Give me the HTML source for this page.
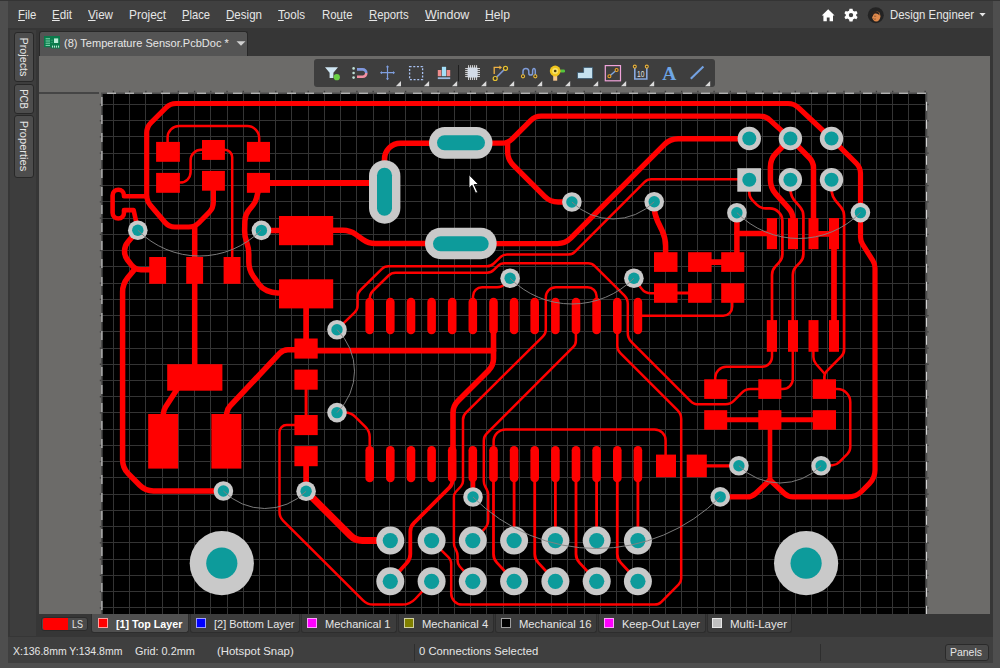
<!DOCTYPE html>
<html lang="en"><head><meta charset="utf-8"><title>Temperature Sensor.PcbDoc</title>
<style>
*{box-sizing:border-box;margin:0;padding:0}
html,body{width:1000px;height:668px;overflow:hidden;background:#4e4e4e;font-family:"Liberation Sans",sans-serif;font-size:11.8px;color:#e4e4e4}
#app{position:absolute;left:0;top:0;width:1000px;height:668px;overflow:hidden;background:#4e4e4e}
.abs{position:absolute}
#frame{left:8px;top:0;width:985px;height:662.5px;background:#363636}
#topline{left:0;top:0;width:1000px;height:1px;background:#343434}
#menubar{left:8px;top:1px;width:985px;height:27px;background:#404040}
.tx{position:absolute;height:16px;line-height:16px;white-space:nowrap;color:#e6e6e6;transform-origin:0 50%}
.tx u{text-decoration:underline;text-underline-offset:1.2px;text-decoration-thickness:1px}
.vtx{position:absolute;white-space:nowrap;color:#e6e6e6;line-height:16px;height:16px}
#work{left:39px;top:56px;width:951px;height:558px;background:#6c6b69}
#workshadow{left:39px;top:91.9px;width:60px;height:1.9px;background:#454545}
.pcb{position:absolute;left:0;top:0}
.icons{position:absolute;left:0;top:0;pointer-events:none}
.stab{position:absolute;left:13.6px;width:20.8px;background:#4d4d4d;border:1px solid #282828;border-radius:3px}
#doctab{left:38.8px;top:31px;width:209.2px;height:25px;background:#545454;border:1px solid #282828;border-bottom:none;border-radius:3px 3px 0 0}
#toolbar{left:314.3px;top:59px;width:400.5px;height:27.6px;background:#3e3e3e;border-radius:3px}
.ltab{position:absolute;top:614px;height:18.5px;background:#3c3c3c;border:1px solid #2d2d2d;border-top:none;border-radius:0 0 3px 3px}
.ltab.on{background:#505050;height:19px}
#ls{left:41.3px;top:616.6px;width:46.6px;height:14.6px;background:#4a4a4a;border:1px solid #2b2b2b;border-radius:3px}
#lsred{left:42.6px;top:617.8px;width:25px;height:12.3px;background:#ff0000;border-radius:2px 0 0 2px}
.sw{position:absolute;top:617.7px;width:10.6px;height:10.4px;border:1px solid rgba(255,255,255,0.62)}
#status{left:8px;top:637px;width:985px;height:25.7px;background:#3f3f3f}
#sidestrip{left:10px;top:29.5px;width:26.2px;height:606.5px;background:#3d3d3d}
.sep{position:absolute;top:644px;width:1px;height:17px;background:#2e2e2e}
#panels{left:944.5px;top:644px;width:44px;height:17px;background:#4a4a4a;border:1px solid #2a2a2a;border-radius:3px}

</style></head>
<body>
<div id="app">
<div class="abs" id="frame"></div>
<div class="abs" id="menubar"></div>
<div class="abs" id="sidestrip"></div>
<div class="abs" id="topline"></div>
<div class="stab" style="top:32px;height:50.3px"></div>
<div class="stab" style="top:84px;height:29.5px"></div>
<div class="stab" style="top:115px;height:62.5px"></div>
<div class="abs" id="doctab"></div>
<div class="abs" id="work"></div>
<div class="abs" id="workshadow"></div>
<svg class="pcb" width="1000" height="668" viewBox="0 0 1000 668">
<defs><clipPath id="bc"><rect x="102.0" y="93.5" width="824.2" height="520.5"/></clipPath></defs>
<rect x="102.0" y="93.5" width="824.2" height="520.5" fill="#000"/>
<g clip-path="url(#bc)">
<path d="M113.5,93.5V614.0M129.5,93.5V614.0M145.5,93.5V614.0M162.5,93.5V614.0M178.5,93.5V614.0M194.5,93.5V614.0M210.5,93.5V614.0M227.5,93.5V614.0M243.5,93.5V614.0M259.5,93.5V614.0M275.5,93.5V614.0M291.5,93.5V614.0M308.5,93.5V614.0M324.5,93.5V614.0M340.5,93.5V614.0M356.5,93.5V614.0M373.5,93.5V614.0M389.5,93.5V614.0M405.5,93.5V614.0M421.5,93.5V614.0M438.5,93.5V614.0M454.5,93.5V614.0M470.5,93.5V614.0M486.5,93.5V614.0M503.5,93.5V614.0M519.5,93.5V614.0M535.5,93.5V614.0M551.5,93.5V614.0M567.5,93.5V614.0M584.5,93.5V614.0M600.5,93.5V614.0M616.5,93.5V614.0M632.5,93.5V614.0M649.5,93.5V614.0M665.5,93.5V614.0M681.5,93.5V614.0M697.5,93.5V614.0M714.5,93.5V614.0M730.5,93.5V614.0M746.5,93.5V614.0M762.5,93.5V614.0M779.5,93.5V614.0M795.5,93.5V614.0M811.5,93.5V614.0M827.5,93.5V614.0M843.5,93.5V614.0M860.5,93.5V614.0M876.5,93.5V614.0M892.5,93.5V614.0M908.5,93.5V614.0M925.5,93.5V614.0M102.0,104.5H926.2M102.0,120.5H926.2M102.0,136.5H926.2M102.0,153.5H926.2M102.0,169.5H926.2M102.0,185.5H926.2M102.0,201.5H926.2M102.0,218.5H926.2M102.0,234.5H926.2M102.0,250.5H926.2M102.0,266.5H926.2M102.0,283.5H926.2M102.0,299.5H926.2M102.0,315.5H926.2M102.0,331.5H926.2M102.0,348.5H926.2M102.0,364.5H926.2M102.0,380.5H926.2M102.0,396.5H926.2M102.0,412.5H926.2M102.0,429.5H926.2M102.0,445.5H926.2M102.0,461.5H926.2M102.0,477.5H926.2M102.0,494.5H926.2M102.0,510.5H926.2M102.0,526.5H926.2M102.0,542.5H926.2M102.0,559.5H926.2M102.0,575.5H926.2M102.0,591.5H926.2M102.0,607.5H926.2" stroke="#343434" stroke-width="1" fill="none" shape-rendering="crispEdges"/>
<g fill="none" stroke="#ff0000" stroke-linecap="round" stroke-linejoin="round">
<path d="M213.4,190.0 L213.40,202.00 A14.65,14.65 0 0 1 209.19,212.28 L198.91,222.72 A14.32,14.32 0 0 1 188.70,227.00 L175.00,227.00 A13.05,13.05 0 0 1 165.09,222.45 L150.61,205.55 A16.21,16.21 0 0 1 146.70,195.00 L146.70,133.00 A14.49,14.49 0 0 1 150.94,122.76 L165.96,107.74 A14.49,14.49 0 0 1 176.20,103.50 L788.00,103.50 A15.19,15.19 0 0 1 798.38,107.60 L827.12,134.50 A383.13,383.13 0 0 1 835.75,142.84 L856.25,163.26 A14.45,14.45 0 0 1 860.50,173.50 L860.50,237.00 A13.85,13.85 0 0 0 862.63,244.38 L872.87,260.62 A13.85,13.85 0 0 1 875.00,268.00 L875.00,470.00 A19.31,19.31 0 0 1 869.34,483.66 L861.76,491.24 A19.31,19.31 0 0 1 848.10,496.90 L793.00,496.90 A12.63,12.63 0 0 1 784.35,493.48 L770.0,480.0" stroke-width="5.2"/>
<path d="M770.0,480.0 L755.65,493.48 A12.63,12.63 0 0 1 747.00,496.90 L720.2,496.9" stroke-width="5.4"/>
<path d="M770.0,420.0 L770.0,480.0" stroke-width="4.6"/>
<path d="M194.7,227.0 L194.7,365.0" stroke-width="5.5"/>
<path d="M490.0,143.2 L502.00,143.20 A14.49,14.49 0 0 0 512.24,138.96 L530.86,120.34 A14.49,14.49 0 0 1 541.10,116.10 L759.50,116.10 A15.59,15.59 0 0 1 769.95,120.12 L790.4,138.6" stroke-width="5.3"/>
<path d="M507.6,143.2 L507.60,151.50 A19.28,19.28 0 0 0 513.26,165.15 L544.54,196.35 A19.35,19.35 0 0 0 558.20,202.00 L571.9,202.0" stroke-width="5.4"/>
<path d="M384.5,162.0 L384.50,159.20 A16.00,16.00 0 0 1 400.50,143.20 L432.0,143.2" stroke-width="5.5"/>
<path d="M494.0,243.6 L557.40,243.60 A19.31,19.31 0 0 0 571.06,237.94 L664.54,144.46 A19.31,19.31 0 0 1 678.20,138.80 L749.3,138.8" stroke-width="5.4"/>
<path d="M258.0,183.0 L372.0,183.0" stroke-width="5.8"/>
<path d="M258.5,190.0 L256.47,198.12 A18.12,18.12 0 0 1 252.99,205.11 L248.77,210.33 A17.64,17.64 0 0 0 244.86,221.00 L244.64,230.00 A32.25,32.25 0 0 0 246.52,241.65 L246.78,242.35 A34.53,34.53 0 0 1 248.80,254.00 L248.80,262.00 A24.99,24.99 0 0 0 253.45,276.51 L258.84,284.07 A19.48,19.48 0 0 0 267.00,290.65 L267.00,290.65 A28.01,28.01 0 0 0 277.44,292.92 L281.0,293.0" stroke-width="5.5"/>
<path d="M261.4,230.4 L281.0,230.4" stroke-width="5.5"/>
<path d="M331.0,230.3 L343.00,230.30 A21.73,21.73 0 0 1 355.68,234.39 L362.82,239.51 A21.73,21.73 0 0 0 375.50,243.60 L428.0,243.6" stroke-width="5.5"/>
<path d="M306.1,306.0 L306.1,340.0" stroke-width="5.7"/>
<path d="M316.0,350.6 L493.5,350.6" stroke-width="5.7"/>
<path d="M493.5,332.0 L493.50,358.50 A16.90,16.90 0 0 1 488.55,370.45 L457.95,401.05 A16.90,16.90 0 0 0 453.00,413.00 L453.0,450.0" stroke-width="5.6"/>
<path d="M452.4,478.0 L452.40,480.60 A9.66,9.66 0 0 1 449.57,487.43 L413.84,523.16 A12.07,12.07 0 0 0 410.30,531.70 L410.30,554.00 A13.06,13.06 0 0 1 406.96,562.72 L390.3,581.3" stroke-width="3.8"/>
<path d="M306.1,491.3 L350.35,535.55 A16.90,16.90 0 0 0 362.30,540.50 L390.3,540.5" stroke-width="7.0"/>
<path d="M306.1,464.0 L306.1,491.3" stroke-width="5.7"/>
<path d="M177.2,389.0 L165.69,406.65 A14.80,14.80 0 0 0 163.30,414.00 L163.2,416.0" stroke-width="5.5"/>
<path d="M226.4,416.0 L226.75,412.97 A12.03,12.03 0 0 1 229.94,406.09 L279.57,353.44 A11.58,11.58 0 0 1 288.00,349.80 L296.0,349.8" stroke-width="5.6"/>
<path d="M137.8,230.2 L127.72,242.17 A13.70,13.70 0 0 0 124.50,251.00 L124.50,251.00 A14.74,14.74 0 0 0 127.54,259.97 L131.35,264.94 A12.16,12.16 0 0 0 141.00,269.70 L151.0,269.7" stroke-width="5.5"/>
<path d="M134.5,269.5 L127.68,277.82 A22.36,22.36 0 0 0 122.60,292.00 L122.60,460.00 A19.37,19.37 0 0 0 128.24,473.67 L139.76,485.23 A19.25,19.25 0 0 0 153.40,490.90 L223.4,490.9" stroke-width="5.5"/>
<path d="M654.2,201.8 L654.20,206.00 A35.49,35.49 0 0 0 657.63,221.23 L662.17,230.77 A35.49,35.49 0 0 1 665.60,246.00 L665.6,254.0" stroke-width="5.5"/>
<path d="M736.9,212.7 L736.9,254.0" stroke-width="5.5"/>
<path d="M736.9,233.4 L768.0,233.4" stroke-width="5.5"/>
<path d="M710.0,262.2 L723.0,262.2" stroke-width="5.7"/>
<path d="M676.0,292.9 L690.0,292.9" stroke-width="3.0"/>
<path d="M790.4,138.6 L776.00,153.29 A19.59,19.59 0 0 0 770.40,167.00 L770.40,180.00 A20.78,20.78 0 0 0 775.76,193.93 L788.98,208.55 A15.58,15.58 0 0 1 793.00,219.00 L793.0,220.0" stroke-width="5.5"/>
<path d="M790.4,138.6 L809.28,157.73 A14.62,14.62 0 0 1 813.50,168.00 L813.5,220.0" stroke-width="5.5"/>
<path d="M817.0,233.8 L831.0,233.8" stroke-width="5.7"/>
<path d="M834.0,247.0 L834.0,322.0" stroke-width="5.7"/>
<path d="M725.0,419.7 L814.0,419.7" stroke-width="5.0"/>
<path d="M705.0,465.8 L738.9,465.8" stroke-width="3.2"/>
<path d="M473.0,480.0 L473.0,497.0" stroke-width="4.6"/>
<path d="M147,196.3 H124 V195.5 A5.7,5.7 0 0 0 112.6,195.5 V212.8 A5.7,5.7 0 0 0 124,212.8 V210.1 H133.6 L137.8,229" stroke-width="4.6"/>
<path d="M167.6,143.0 L167.60,137.60 A11.50,11.50 0 0 1 179.10,126.10 L247.20,126.10 A12.00,12.00 0 0 1 259.20,138.10 L259.2,143.0" stroke-width="2.5"/>
<path d="M203.0,149.8 L201.10,149.80 A10.50,10.50 0 0 0 190.60,160.30 L190.60,172.10 A10.50,10.50 0 0 1 180.10,182.60 L179.0,182.6" stroke-width="2.5"/>
<path d="M224.0,149.8 L224.70,149.80 A7.50,7.50 0 0 1 232.20,157.30 L232.2,257.0" stroke-width="2.5"/>
<path d="M337.0,329.7 L354.74,312.30 A9.52,9.52 0 0 0 357.60,305.50 L357.60,297.00 A9.61,9.61 0 0 1 360.44,290.18 L381.66,269.12 A9.71,9.71 0 0 1 388.50,266.30 L487.00,266.30 A9.83,9.83 0 0 0 493.86,263.51 L500.14,257.39 A9.83,9.83 0 0 1 507.00,254.60 L568.00,254.60 A9.66,9.66 0 0 0 574.83,251.77 L644.47,182.13 A9.66,9.66 0 0 1 651.30,179.30 L739.0,179.3" stroke-width="2.5"/>
<path d="M369.7,300.0 L369.70,299.00 A11.88,11.88 0 0 1 373.28,290.51 L388.64,275.50 A9.82,9.82 0 0 1 395.50,272.70 L487.00,272.70 A9.73,9.73 0 0 0 493.84,269.89 L497.66,266.11 A9.73,9.73 0 0 1 504.50,263.30 L588.00,263.30 A9.68,9.68 0 0 1 594.83,266.12 L624.26,295.47 A12.05,12.05 0 0 1 627.80,304.00 L627.80,333.30 A12.07,12.07 0 0 0 631.34,341.84 L690.26,400.76 A12.07,12.07 0 0 0 698.80,404.30 L725.50,404.30 A11.90,11.90 0 0 0 734.00,400.73 L742.00,392.57 A11.90,11.90 0 0 1 750.50,389.00 L759.0,389.0" stroke-width="2.5"/>
<path d="M510.1,278.3 L505.34,283.58 A11.23,11.23 0 0 1 497.00,287.30 L482.00,287.30 A9.00,9.00 0 0 0 473.00,296.30 L473.0,300.0" stroke-width="2.5"/>
<path d="M596.6,300.0 L596.60,296.30 A9.00,9.00 0 0 0 587.60,287.30 L555.80,287.30 A10.00,10.00 0 0 0 545.80,297.30 L545.80,329.50 A9.62,9.62 0 0 1 542.96,336.32 L465.84,412.98 A9.62,9.62 0 0 0 463.00,419.80 L463.00,481.00 A7.75,7.75 0 0 1 460.98,486.22 L455.92,491.78 A7.75,7.75 0 0 0 453.90,497.00 L453.90,543.00 A12.10,12.10 0 0 0 455.30,548.65 L456.20,550.35 A12.10,12.10 0 0 1 457.60,556.00 L457.60,561.00 A7.88,7.88 0 0 0 459.59,566.24 L473.0,581.3" stroke-width="2.5"/>
<path d="M575.9,332.0 L575.90,340.40 A9.66,9.66 0 0 1 573.07,347.23 L486.63,433.67 A9.66,9.66 0 0 0 483.80,440.50 L483.80,481.00 A11.68,11.68 0 0 0 485.25,486.63 L486.75,489.37 A11.68,11.68 0 0 1 488.20,495.00 L488.20,520.00 A12.30,12.30 0 0 1 484.71,528.58 L473.0,540.6" stroke-width="2.5"/>
<path d="M617.3,332.0 L617.30,346.00 A9.67,9.67 0 0 0 620.13,352.83 L677.67,410.46 A12.08,12.08 0 0 1 681.20,419.00 L681.20,578.50 A8.45,8.45 0 0 1 678.73,584.47 L661.43,601.77 A9.66,9.66 0 0 1 654.60,604.60 L462.06,604.60 A10.66,10.66 0 0 1 454.35,601.30 L454.35,601.30 A11.39,11.39 0 0 1 451.20,593.44 L451.20,564.00 A9.59,9.59 0 0 0 448.36,557.19 L431.6,540.6" stroke-width="2.5"/>
<path d="M637.9,315.7 L723.20,315.70 A9.00,9.00 0 0 0 732.20,306.70 L732.2,301.0" stroke-width="2.5"/>
<path d="M633.9,278.3 L641.43,288.48 A11.90,11.90 0 0 0 651.00,293.30 L656.0,293.3" stroke-width="2.5"/>
<path d="M493.6,447.0 L493.60,441.40 A12.00,12.00 0 0 1 505.60,429.40 L654.60,429.40 A11.00,11.00 0 0 1 665.60,440.40 L665.6,456.0" stroke-width="2.5"/>
<path d="M493.5,480.0 L493.48,554.00 A12.77,12.77 0 0 0 496.88,562.67 L514.1,581.3" stroke-width="2.8"/>
<path d="M514.1,480.0 L514.1,540.6" stroke-width="2.8"/>
<path d="M534.7,480.0 L534.74,554.00 A12.77,12.77 0 0 0 538.14,562.67 L555.4,581.3" stroke-width="2.8"/>
<path d="M555.4,480.0 L555.4,540.6" stroke-width="2.8"/>
<path d="M576.0,480.0 L576.00,554.00 A12.77,12.77 0 0 0 579.40,562.67 L596.6,581.3" stroke-width="2.8"/>
<path d="M596.6,480.0 L596.6,540.6" stroke-width="2.8"/>
<path d="M617.3,480.0 L617.26,554.00 A12.77,12.77 0 0 0 620.66,562.67 L637.9,581.3" stroke-width="2.8"/>
<path d="M637.9,480.0 L637.9,540.6" stroke-width="2.8"/>
<path d="M296.0,425.0 L286.50,425.00 A7.00,7.00 0 0 0 279.50,432.00 L279.50,512.00 A12.05,12.05 0 0 0 283.04,520.53 L363.05,600.36 A14.51,14.51 0 0 0 373.30,604.60 L402.00,604.60 A18.33,18.33 0 0 0 415.44,598.73 L431.6,581.3" stroke-width="2.5"/>
<path d="M337.0,412.6 L345.00,412.60 A14.65,14.65 0 0 1 355.28,416.81 L365.42,426.79 A14.32,14.32 0 0 1 369.70,437.00 L369.7,448.0" stroke-width="2.5"/>
<path d="M306.1,388.0 L306.1,416.0" stroke-width="3.0"/>
<path d="M749.3,190.0 L749.30,193.00 A9.78,9.78 0 0 0 752.10,199.85 L757.00,204.83 A11.92,11.92 0 0 0 765.50,208.40 L769.70,208.40 A12.57,12.57 0 0 1 778.70,212.20 L778.91,212.42 A12.30,12.30 0 0 1 782.40,221.00 L782.40,254.00 A12.57,12.57 0 0 1 778.96,262.63 L775.44,266.37 A12.57,12.57 0 0 0 772.00,275.00 L772.0,322.0" stroke-width="2.7"/>
<path d="M790.4,190.0 L790.88,193.05 A14.21,14.21 0 0 0 794.09,200.05 L800.16,207.19 A13.60,13.60 0 0 1 803.40,216.00 L803.40,254.00 A12.39,12.39 0 0 1 799.93,262.60 L796.27,266.40 A12.39,12.39 0 0 0 792.80,275.00 L792.8,322.0" stroke-width="2.7"/>
<path d="M831.5,190.0 L831.98,193.05 A14.69,14.69 0 0 0 835.14,200.09 L840.93,207.14 A13.96,13.96 0 0 1 844.10,216.00 L844.10,349.50 A9.76,9.76 0 0 1 841.29,356.35 L826.51,371.36 A7.32,7.32 0 0 0 824.40,376.50 L824.4,381.0" stroke-width="2.7"/>
<path d="M813.4,350.0 L813.40,357.00 A10.60,10.60 0 0 0 816.04,364.00 L824.4,373.5" stroke-width="2.5"/>
<path d="M772.0,350.0 L772.00,356.80 A10.00,10.00 0 0 1 762.00,366.80 L726.20,366.80 A11.00,11.00 0 0 0 715.20,377.80 L715.2,381.0" stroke-width="2.5"/>
<path d="M792.8,350.0 L792.80,379.00 A10.00,10.00 0 0 1 782.80,389.00 L780.0,389.0" stroke-width="2.5"/>
<path d="M834.5,389.0 L837.30,389.00 A13.00,13.00 0 0 1 850.30,402.00 L850.30,447.00 A9.76,9.76 0 0 1 847.49,453.85 L839.31,462.15 A10.30,10.30 0 0 1 832.51,465.21 L821.1,465.8" stroke-width="2.5"/>
</g>
<g fill="#ff0000">
<rect x="156.1" y="141.9" width="23.8" height="19.9"/>
<rect x="202.0" y="140.0" width="22.9" height="19.9"/>
<rect x="246.9" y="141.9" width="23.1" height="19.9"/>
<rect x="156.1" y="172.9" width="23.8" height="19.9"/>
<rect x="202.0" y="170.9" width="22.9" height="19.8"/>
<rect x="246.9" y="172.9" width="23.1" height="19.9"/>
<rect x="149.2" y="257.0" width="16.9" height="26.8"/>
<rect x="186.2" y="257.0" width="16.9" height="26.8"/>
<rect x="223.6" y="257.0" width="16.9" height="26.8"/>
<rect x="279.0" y="216.0" width="54.2" height="29.2"/>
<rect x="279.0" y="279.3" width="54.2" height="29.1"/>
<rect x="167.2" y="364.2" width="55.2" height="26.5"/>
<rect x="148.2" y="414.0" width="30.0" height="54.6"/>
<rect x="211.4" y="414.0" width="30.0" height="54.6"/>
<rect x="294.4" y="338.5" width="23.3" height="20.1"/>
<rect x="294.4" y="369.6" width="23.3" height="20.1"/>
<rect x="294.4" y="415.0" width="23.3" height="20.1"/>
<rect x="294.4" y="446.1" width="23.3" height="20.1"/>
<rect x="654.0" y="252.2" width="23.5" height="19.7"/>
<rect x="654.0" y="283.3" width="23.5" height="19.5"/>
<rect x="688.1" y="252.2" width="23.5" height="19.7"/>
<rect x="688.1" y="283.3" width="23.5" height="19.5"/>
<rect x="721.2" y="252.2" width="23.1" height="19.7"/>
<rect x="721.2" y="283.3" width="23.1" height="19.5"/>
<rect x="766.8" y="218.1" width="10.2" height="31.1"/>
<rect x="766.8" y="320.1" width="10.2" height="31.7"/>
<rect x="788.0" y="218.1" width="10.0" height="31.1"/>
<rect x="788.0" y="320.1" width="10.0" height="31.7"/>
<rect x="808.5" y="218.1" width="10.0" height="31.1"/>
<rect x="808.5" y="320.1" width="10.0" height="31.7"/>
<rect x="829.0" y="218.1" width="10.0" height="31.1"/>
<rect x="829.0" y="320.1" width="10.0" height="31.7"/>
<rect x="704.2" y="379.3" width="23.0" height="19.6"/>
<rect x="704.2" y="410.2" width="23.0" height="19.5"/>
<rect x="758.3" y="379.3" width="23.1" height="19.6"/>
<rect x="758.3" y="410.2" width="23.1" height="19.5"/>
<rect x="812.7" y="379.3" width="23.3" height="19.6"/>
<rect x="812.7" y="410.2" width="23.3" height="19.5"/>
<rect x="656.0" y="454.6" width="20.0" height="22.6"/>
<rect x="686.7" y="454.6" width="20.1" height="22.6"/>
<rect x="365.4" y="297.8" width="8.6" height="36.4" rx="4.3"/>
<rect x="365.4" y="446.0" width="8.6" height="36.2" rx="4.3"/>
<rect x="386.0" y="297.8" width="8.6" height="36.4" rx="4.3"/>
<rect x="386.0" y="446.0" width="8.6" height="36.2" rx="4.3"/>
<rect x="406.7" y="297.8" width="8.6" height="36.4" rx="4.3"/>
<rect x="406.7" y="446.0" width="8.6" height="36.2" rx="4.3"/>
<rect x="427.3" y="297.8" width="8.6" height="36.4" rx="4.3"/>
<rect x="427.3" y="446.0" width="8.6" height="36.2" rx="4.3"/>
<rect x="447.9" y="297.8" width="8.6" height="36.4" rx="4.3"/>
<rect x="447.9" y="446.0" width="8.6" height="36.2" rx="4.3"/>
<rect x="468.5" y="297.8" width="8.6" height="36.4" rx="4.3"/>
<rect x="468.5" y="446.0" width="8.6" height="36.2" rx="4.3"/>
<rect x="489.2" y="297.8" width="8.6" height="36.4" rx="4.3"/>
<rect x="489.2" y="446.0" width="8.6" height="36.2" rx="4.3"/>
<rect x="509.8" y="297.8" width="8.6" height="36.4" rx="4.3"/>
<rect x="509.8" y="446.0" width="8.6" height="36.2" rx="4.3"/>
<rect x="530.4" y="297.8" width="8.6" height="36.4" rx="4.3"/>
<rect x="530.4" y="446.0" width="8.6" height="36.2" rx="4.3"/>
<rect x="551.1" y="297.8" width="8.6" height="36.4" rx="4.3"/>
<rect x="551.1" y="446.0" width="8.6" height="36.2" rx="4.3"/>
<rect x="571.7" y="297.8" width="8.6" height="36.4" rx="4.3"/>
<rect x="571.7" y="446.0" width="8.6" height="36.2" rx="4.3"/>
<rect x="592.3" y="297.8" width="8.6" height="36.4" rx="4.3"/>
<rect x="592.3" y="446.0" width="8.6" height="36.2" rx="4.3"/>
<rect x="613.0" y="297.8" width="8.6" height="36.4" rx="4.3"/>
<rect x="613.0" y="446.0" width="8.6" height="36.2" rx="4.3"/>
<rect x="633.6" y="297.8" width="8.6" height="36.4" rx="4.3"/>
<rect x="633.6" y="446.0" width="8.6" height="36.2" rx="4.3"/>
</g>
<g>
<rect x="369.0" y="160.2" width="31.4" height="63.5" rx="15.7" fill="#c9c9c9"/>
<rect x="377.0" y="167.8" width="15.0" height="47.9" rx="7.5" fill="#0d9b9b"/>
<rect x="429.0" y="127.1" width="63.5" height="31.7" rx="15.9" fill="#c9c9c9"/>
<rect x="437.0" y="135.2" width="48.0" height="15.0" rx="7.5" fill="#0d9b9b"/>
<rect x="425.0" y="227.7" width="71.7" height="31.5" rx="15.8" fill="#c9c9c9"/>
<rect x="433.0" y="236.2" width="55.7" height="15.0" rx="7.5" fill="#0d9b9b"/>
<rect x="737.3" y="168.2" width="23.7" height="23.5" fill="#c9c9c9"/><circle cx="749.3" cy="179.8" r="7" fill="#0d9b9b"/>
<circle cx="390.3" cy="540.6" r="14.0" fill="#c9c9c9"/><circle cx="390.3" cy="540.6" r="7.6" fill="#0d9b9b"/>
<circle cx="390.3" cy="581.3" r="14.0" fill="#c9c9c9"/><circle cx="390.3" cy="581.3" r="7.6" fill="#0d9b9b"/>
<circle cx="431.6" cy="540.6" r="14.0" fill="#c9c9c9"/><circle cx="431.6" cy="540.6" r="7.6" fill="#0d9b9b"/>
<circle cx="431.6" cy="581.3" r="14.0" fill="#c9c9c9"/><circle cx="431.6" cy="581.3" r="7.6" fill="#0d9b9b"/>
<circle cx="472.8" cy="540.6" r="14.0" fill="#c9c9c9"/><circle cx="472.8" cy="540.6" r="7.6" fill="#0d9b9b"/>
<circle cx="472.8" cy="581.3" r="14.0" fill="#c9c9c9"/><circle cx="472.8" cy="581.3" r="7.6" fill="#0d9b9b"/>
<circle cx="514.1" cy="540.6" r="14.0" fill="#c9c9c9"/><circle cx="514.1" cy="540.6" r="7.6" fill="#0d9b9b"/>
<circle cx="514.1" cy="581.3" r="14.0" fill="#c9c9c9"/><circle cx="514.1" cy="581.3" r="7.6" fill="#0d9b9b"/>
<circle cx="555.4" cy="540.6" r="14.0" fill="#c9c9c9"/><circle cx="555.4" cy="540.6" r="7.6" fill="#0d9b9b"/>
<circle cx="555.4" cy="581.3" r="14.0" fill="#c9c9c9"/><circle cx="555.4" cy="581.3" r="7.6" fill="#0d9b9b"/>
<circle cx="596.7" cy="540.6" r="14.0" fill="#c9c9c9"/><circle cx="596.7" cy="540.6" r="7.6" fill="#0d9b9b"/>
<circle cx="596.7" cy="581.3" r="14.0" fill="#c9c9c9"/><circle cx="596.7" cy="581.3" r="7.6" fill="#0d9b9b"/>
<circle cx="637.9" cy="540.6" r="14.0" fill="#c9c9c9"/><circle cx="637.9" cy="540.6" r="7.6" fill="#0d9b9b"/>
<circle cx="637.9" cy="581.3" r="14.0" fill="#c9c9c9"/><circle cx="637.9" cy="581.3" r="7.6" fill="#0d9b9b"/>
<circle cx="749.3" cy="138.5" r="11.7" fill="#c9c9c9"/><circle cx="749.3" cy="138.5" r="7.0" fill="#0d9b9b"/>
<circle cx="790.4" cy="138.5" r="11.7" fill="#c9c9c9"/><circle cx="790.4" cy="138.5" r="7.0" fill="#0d9b9b"/>
<circle cx="790.4" cy="179.8" r="11.7" fill="#c9c9c9"/><circle cx="790.4" cy="179.8" r="7.0" fill="#0d9b9b"/>
<circle cx="831.5" cy="138.5" r="11.7" fill="#c9c9c9"/><circle cx="831.5" cy="138.5" r="7.0" fill="#0d9b9b"/>
<circle cx="831.5" cy="179.8" r="11.7" fill="#c9c9c9"/><circle cx="831.5" cy="179.8" r="7.0" fill="#0d9b9b"/>
<circle cx="137.8" cy="230.2" r="9.8" fill="#c9c9c9"/><circle cx="137.8" cy="230.2" r="5.7" fill="#0d9b9b"/>
<circle cx="261.4" cy="230.4" r="9.8" fill="#c9c9c9"/><circle cx="261.4" cy="230.4" r="5.7" fill="#0d9b9b"/>
<circle cx="223.4" cy="491.0" r="9.8" fill="#c9c9c9"/><circle cx="223.4" cy="491.0" r="5.7" fill="#0d9b9b"/>
<circle cx="337.0" cy="329.7" r="9.8" fill="#c9c9c9"/><circle cx="337.0" cy="329.7" r="5.7" fill="#0d9b9b"/>
<circle cx="337.0" cy="412.6" r="9.8" fill="#c9c9c9"/><circle cx="337.0" cy="412.6" r="5.7" fill="#0d9b9b"/>
<circle cx="306.1" cy="491.3" r="9.8" fill="#c9c9c9"/><circle cx="306.1" cy="491.3" r="5.7" fill="#0d9b9b"/>
<circle cx="473.0" cy="497.0" r="9.8" fill="#c9c9c9"/><circle cx="473.0" cy="497.0" r="5.7" fill="#0d9b9b"/>
<circle cx="571.9" cy="202.0" r="9.8" fill="#c9c9c9"/><circle cx="571.9" cy="202.0" r="5.7" fill="#0d9b9b"/>
<circle cx="654.2" cy="201.8" r="9.8" fill="#c9c9c9"/><circle cx="654.2" cy="201.8" r="5.7" fill="#0d9b9b"/>
<circle cx="510.1" cy="278.3" r="9.8" fill="#c9c9c9"/><circle cx="510.1" cy="278.3" r="5.7" fill="#0d9b9b"/>
<circle cx="633.9" cy="278.3" r="9.8" fill="#c9c9c9"/><circle cx="633.9" cy="278.3" r="5.7" fill="#0d9b9b"/>
<circle cx="736.9" cy="212.7" r="9.8" fill="#c9c9c9"/><circle cx="736.9" cy="212.7" r="5.7" fill="#0d9b9b"/>
<circle cx="720.2" cy="496.9" r="9.8" fill="#c9c9c9"/><circle cx="720.2" cy="496.9" r="5.7" fill="#0d9b9b"/>
<circle cx="738.9" cy="465.8" r="9.8" fill="#c9c9c9"/><circle cx="738.9" cy="465.8" r="5.7" fill="#0d9b9b"/>
<circle cx="821.1" cy="465.8" r="9.8" fill="#c9c9c9"/><circle cx="821.1" cy="465.8" r="5.7" fill="#0d9b9b"/>
<circle cx="860.4" cy="212.6" r="9.8" fill="#c9c9c9"/><circle cx="860.4" cy="212.6" r="5.7" fill="#0d9b9b"/>
<circle cx="221.8" cy="563.2" r="32.1" fill="#c9c9c9"/><circle cx="221.8" cy="563.2" r="15.6" fill="#0d9b9b"/>
<circle cx="806.1" cy="563.2" r="32.1" fill="#c9c9c9"/><circle cx="806.1" cy="563.2" r="15.6" fill="#0d9b9b"/>
</g>
<g fill="none" stroke="#828282" stroke-width="0.95">
<path d="M137.8,230.2 A86.4,86.4 0 0 0 261.0,230.2"/>
<path d="M337.0,329.7 A57.8,57.8 0 0 1 337.0,412.6"/>
<path d="M223.4,491.0 A57.9,57.9 0 0 0 306.1,491.3"/>
<path d="M571.9,202.0 A58.1,58.1 0 0 0 654.2,201.8"/>
<path d="M510.1,278.3 A87.4,87.4 0 0 0 633.9,278.3"/>
<path d="M736.9,212.7 A86.7,86.7 0 0 0 860.4,212.6"/>
<path d="M738.9,465.8 A57.7,57.7 0 0 0 821.1,465.8"/>
<path d="M473.0,497.0 A174.0,174.0 0 0 0 720.2,496.9"/>
</g>
</g>
<g fill="none" stroke="#4e4e4e" stroke-width="1.6">
<path d="M101.1,93.25H927.2 M101.85,92.5V614 M926.5,92.5V614"/>
</g>
<g fill="none" stroke-width="1.5" stroke-dasharray="9 9">
<path d="M107,93.25H927.2" stroke="#b0b0b0"/>
<path d="M101.85,97V614" stroke="#aaaaaa"/>
<path d="M926.6,101.8V614" stroke="#dedede" stroke-width="1.0"/>
</g>
<path d="M113.40,90.8v1.4M129.63,90.8v1.4M145.87,90.8v1.4M162.11,90.8v1.4M178.34,90.8v1.4M194.58,90.8v1.4M210.81,90.8v1.4M227.05,90.8v1.4M243.28,90.8v1.4M259.52,90.8v1.4M275.75,90.8v1.4M291.99,90.8v1.4M308.22,90.8v1.4M324.46,90.8v1.4M340.69,90.8v1.4M356.93,90.8v1.4M373.16,90.8v1.4M389.40,90.8v1.4M405.63,90.8v1.4M421.87,90.8v1.4M438.10,90.8v1.4M454.34,90.8v1.4M470.57,90.8v1.4M486.81,90.8v1.4M503.04,90.8v1.4M519.28,90.8v1.4M535.51,90.8v1.4M551.75,90.8v1.4M567.98,90.8v1.4M584.22,90.8v1.4M600.45,90.8v1.4M616.69,90.8v1.4M632.92,90.8v1.4M649.16,90.8v1.4M665.39,90.8v1.4M681.63,90.8v1.4M697.86,90.8v1.4M714.10,90.8v1.4M730.33,90.8v1.4M746.57,90.8v1.4M762.80,90.8v1.4M779.04,90.8v1.4M795.27,90.8v1.4M811.51,90.8v1.4M827.74,90.8v1.4M843.98,90.8v1.4M860.21,90.8v1.4M876.45,90.8v1.4M892.68,90.8v1.4M908.92,90.8v1.4M925.15,90.8v1.4M99.8,104.50h1.3M927.3,104.50h1.3M99.8,120.73h1.3M927.3,120.73h1.3M99.8,136.97h1.3M927.3,136.97h1.3M99.8,153.20h1.3M927.3,153.20h1.3M99.8,169.44h1.3M927.3,169.44h1.3M99.8,185.68h1.3M927.3,185.68h1.3M99.8,201.91h1.3M927.3,201.91h1.3M99.8,218.15h1.3M927.3,218.15h1.3M99.8,234.38h1.3M927.3,234.38h1.3M99.8,250.62h1.3M927.3,250.62h1.3M99.8,266.85h1.3M927.3,266.85h1.3M99.8,283.09h1.3M927.3,283.09h1.3M99.8,299.32h1.3M927.3,299.32h1.3M99.8,315.56h1.3M927.3,315.56h1.3M99.8,331.79h1.3M927.3,331.79h1.3M99.8,348.03h1.3M927.3,348.03h1.3M99.8,364.26h1.3M927.3,364.26h1.3M99.8,380.50h1.3M927.3,380.50h1.3M99.8,396.73h1.3M927.3,396.73h1.3M99.8,412.97h1.3M927.3,412.97h1.3M99.8,429.20h1.3M927.3,429.20h1.3M99.8,445.44h1.3M927.3,445.44h1.3M99.8,461.67h1.3M927.3,461.67h1.3M99.8,477.91h1.3M927.3,477.91h1.3M99.8,494.14h1.3M927.3,494.14h1.3M99.8,510.38h1.3M927.3,510.38h1.3M99.8,526.61h1.3M927.3,526.61h1.3M99.8,542.85h1.3M927.3,542.85h1.3M99.8,559.08h1.3M927.3,559.08h1.3M99.8,575.32h1.3M927.3,575.32h1.3M99.8,591.55h1.3M927.3,591.55h1.3M99.8,607.79h1.3M927.3,607.79h1.3" stroke="#3c3c3c" stroke-width="1.3" fill="none"/>
<path d="M469,174.7 v13.5 l3.1,-2.9 l3.5,7.9 l2.1,-0.9 l-3.5,-7.8 h4.4 z" fill="#fff" stroke="#000" stroke-width="0.9" stroke-linejoin="round"/>
</svg>
<div class="abs" id="toolbar"></div>
<div class="abs" id="ls"></div><div class="abs" id="lsred"></div>
<div class="ltab on" style="left:90.8px;width:98.6px"></div>
<div class="ltab" style="left:190px;width:110px"></div>
<div class="ltab" style="left:301px;width:96px"></div>
<div class="ltab" style="left:398px;width:96px"></div>
<div class="ltab" style="left:495px;width:102px"></div>
<div class="ltab" style="left:598px;width:108px"></div>
<div class="ltab" style="left:707px;width:85px"></div>
<div class="sw" style="left:97.5px;background:#ff0000"></div>
<div class="sw" style="left:195.5px;background:#0000ff"></div>
<div class="sw" style="left:306.8px;background:#ff00ff"></div>
<div class="sw" style="left:403.6px;background:#808000"></div>
<div class="sw" style="left:500.8px;background:#000000"></div>
<div class="sw" style="left:603.6px;background:#ff00ff"></div>
<div class="sw" style="left:711.8px;background:#c0c0c0"></div>
<div class="abs" id="status"></div>
<div class="sep" style="left:413.5px"></div>
<div class="sep" style="left:819.5px"></div>
<div class="abs" id="panels"></div>
<div class="tx" style="left:17.6px;top:6.9px;font-size:12.9px;transform:scaleX(0.876)"><u>F</u>ile</div>
<div class="tx" style="left:51.6px;top:6.9px;font-size:12.9px;transform:scaleX(0.900)"><u>E</u>dit</div>
<div class="tx" style="left:87.6px;top:6.9px;font-size:12.9px;transform:scaleX(0.902)"><u>V</u>iew</div>
<div class="tx" style="left:128.6px;top:6.9px;font-size:12.9px;transform:scaleX(0.922)">Proje<u>c</u>t</div>
<div class="tx" style="left:181.6px;top:6.9px;font-size:12.9px;transform:scaleX(0.868)"><u>P</u>lace</div>
<div class="tx" style="left:225.6px;top:6.9px;font-size:12.9px;transform:scaleX(0.897)"><u>D</u>esign</div>
<div class="tx" style="left:277.6px;top:6.9px;font-size:12.9px;transform:scaleX(0.897)"><u>T</u>ools</div>
<div class="tx" style="left:322.1px;top:6.9px;font-size:12.9px;transform:scaleX(0.886)">Ro<u>u</u>te</div>
<div class="tx" style="left:368.9px;top:6.9px;font-size:12.9px;transform:scaleX(0.879)"><u>R</u>eports</div>
<div class="tx" style="left:424.6px;top:6.9px;font-size:12.9px;transform:scaleX(0.966)"><u>W</u>indow</div>
<div class="tx" style="left:484.6px;top:6.9px;font-size:12.9px;transform:scaleX(0.943)"><u>H</u>elp</div>
<div class="tx" style="left:890.4px;top:6.9px;font-size:12.9px;transform:scaleX(0.883)">Design Engineer</div>
<div class="tx" style="left:64.2px;top:35.4px;font-size:11.6px;transform:scaleX(0.952)">(8) Temperature Sensor.PcbDoc *</div>
<div class="tx" style="left:71.6px;top:616.2px;font-size:11.4px;transform:scaleX(0.789)">LS</div>
<div class="tx" style="left:116.3px;top:616.2px;font-size:11.4px;transform:scaleX(0.938);font-weight:bold;color:#ffffff">[1] Top Layer</div>
<div class="tx" style="left:214.1px;top:616.2px;font-size:11.4px;transform:scaleX(0.963)">[2] Bottom Layer</div>
<div class="tx" style="left:325.1px;top:616.2px;font-size:11.4px;transform:scaleX(0.976)">Mechanical 1</div>
<div class="tx" style="left:422.1px;top:616.2px;font-size:11.4px;transform:scaleX(0.986)">Mechanical 4</div>
<div class="tx" style="left:519.1px;top:616.2px;font-size:11.4px;transform:scaleX(0.987)">Mechanical 16</div>
<div class="tx" style="left:621.6px;top:616.2px;font-size:11.4px;transform:scaleX(0.970)">Keep-Out Layer</div>
<div class="tx" style="left:730.1px;top:616.2px;font-size:11.4px;transform:scaleX(1.012)">Multi-Layer</div>
<div class="tx" style="left:12.6px;top:643.4px;font-size:11.4px;transform:scaleX(0.921)">X:136.8mm Y:134.8mm</div>
<div class="tx" style="left:135.3px;top:643.4px;font-size:11.4px;transform:scaleX(0.954)">Grid: 0.2mm</div>
<div class="tx" style="left:216.6px;top:643.4px;font-size:11.4px;transform:scaleX(1.001)">(Hotspot Snap)</div>
<div class="tx" style="left:419.1px;top:643.4px;font-size:11.4px;transform:scaleX(0.991)">0 Connections Selected</div>
<div class="tx" style="left:950.1px;top:644.4px;font-size:11.4px;transform:scaleX(0.918)">Panels</div>
<div class="vtx" style="left:24.2px;top:56.8px;font-size:11.4px;transform:translate(-50%,-50%) rotate(90deg) scaleX(0.945)">Projects</div>
<div class="vtx" style="left:24.2px;top:99.2px;font-size:11.4px;transform:translate(-50%,-50%) rotate(90deg) scaleX(0.833)">PCB</div>
<div class="vtx" style="left:24.2px;top:146.2px;font-size:11.4px;transform:translate(-50%,-50%) rotate(90deg) scaleX(0.973)">Properties</div>
<svg class="icons" width="1000" height="668" viewBox="0 0 1000 668">
<!-- top right: home, gear, avatar, caret -->
<path d="M828.2,9.2 L834.6,15.6 H833 V21.2 H829.6 V17.6 H826.8 V21.2 H823.4 V15.6 H821.8 Z" fill="#ffffff"/>
<g transform="translate(851,15.1)">
<path fill="#ffffff" fill-rule="evenodd" d="M-1.5,-6.3 H1.5 L2,-4.4 L3.6,-3.5 L5.4,-4.1 L6.6,-1.9 L5.2,-0.7 V0.7 L6.6,1.9 L5.4,4.1 L3.6,3.5 L2,4.4 L1.5,6.3 H-1.5 L-2,4.4 L-3.6,3.5 L-5.4,4.1 L-6.6,1.9 L-5.2,0.7 V-0.7 L-6.6,-1.9 L-5.4,-4.1 L-3.6,-3.5 L-2,-4.4 Z M0,-2.2 A2.2,2.2 0 1 0 0,2.2 A2.2,2.2 0 1 0 0,-2.2 Z"/>
</g>
<circle cx="875.8" cy="15.2" r="8" fill="#232323"/>
<ellipse cx="876.2" cy="16.3" rx="4.2" ry="5.2" fill="#e08a4c"/>
<path d="M871.3,14 Q872,10.5 875.5,11 Q879.5,11.2 879.6,15.5 Q877.5,12.8 874.8,13.6 Q873,14.3 872.6,17 Q871.4,16 871.3,14 Z" fill="#2a2320"/>
<path d="M874,16.2 h2.2 M873.4,18.6 q1.2,1 2.6,0.4" stroke="#7a4526" stroke-width="0.7" fill="none"/>
<path d="M979.4,13 H985.6 L982.5,16.4 Z" fill="#e6e6e6"/>
<!-- doc tab icon -->
<path d="M44,36 H60 V48.5 H51 V47.2 H44 Z" fill="#0b7a4b"/>
<path d="M45.6,38.8 H50 M45.6,41 H50 M45.6,43.2 H50 M45.6,45.4 H50" stroke="#8fe6bd" stroke-width="0.9"/>
<path d="M50.8,40.2 H53 M50.8,42.4 H53" stroke="#35a878" stroke-width="0.8"/>
<rect x="54" y="38.4" width="4.2" height="4.6" fill="#b9ecd6"/>
<path d="M52.6,45.6 V47.6 M54.6,45.6 V47.6 M56.6,45.6 V47.6 M58.6,45.6 V47.6" stroke="#c8f2e0" stroke-width="1"/>
<path d="M236.5,41.3 H245.5 L241,45.8 Z" fill="#d0d0d0"/>
<!-- toolbar corner triangles -->
<g fill="#dadada">
<path d="M401,81 V86.2 H395.8 Z"/>
<path d="M429.1,81 V86.2 H423.9 Z"/>
<path d="M457.2,81 V86.2 H452 Z"/>
<path d="M486.3,81 V86.2 H481.1 Z"/>
<path d="M514.2,81 V86.2 H509 Z"/>
<path d="M542.2,81 V86.2 H537 Z"/>
<path d="M570.2,81 V86.2 H565 Z"/>
<path d="M598.2,81 V86.2 H593 Z"/>
<path d="M626.2,81 V86.2 H621 Z"/>
<path d="M654.2,81 V86.2 H649 Z"/>
<path d="M710.2,81 V86.2 H705 Z"/>
</g>
<!-- 1 filter -->
<path d="M325,67.2 H338 L333.4,72.8 V78 H329.6 V72.8 Z" fill="#cfe6f3"/>
<circle cx="336.8" cy="77.2" r="3.1" fill="#69d044"/>
<!-- 2 magnet -->
<circle cx="353.6" cy="68.4" r="1.3" fill="#bfe0d6"/><circle cx="353.6" cy="73" r="1.3" fill="#bfe0d6"/><circle cx="353.6" cy="77.6" r="1.3" fill="#bfe0d6"/>
<path d="M357,69.4 H362.6 A3.7,3.7 0 0 1 366.3,73.1" stroke="#8098de" stroke-width="2.6" fill="none"/>
<path d="M366.3,73.1 A3.7,3.7 0 0 1 362.6,76.8 H357" stroke="#f38fa2" stroke-width="2.6" fill="none"/>
<!-- 3 cross -->
<path d="M380.8,72.7 H394.2 M387.5,66 V79.5" stroke="#7f9fe0" stroke-width="1.2" fill="none"/>
<path d="M387.5,65.2 l1.6,2 h-3.2 z M387.5,80.2 l1.6,-2 h-3.2 z M380,72.7 l2,-1.6 v3.2 z M395,72.7 l-2,-1.6 v3.2 z" fill="#7f9fe0"/>
<!-- 4 dashed rect -->
<rect x="409.6" y="66.6" width="13" height="13" fill="none" stroke="#a9c2f2" stroke-width="1.3" stroke-dasharray="2 1.67"/>
<!-- 5 align -->
<rect x="437.8" y="70" width="3.6" height="6.2" fill="#f08c8c"/><rect x="446.6" y="70" width="3.6" height="6.2" fill="#f08c8c"/>
<rect x="441.9" y="66.8" width="4.2" height="9.4" fill="#a3def8"/>
<rect x="437.8" y="77.3" width="12.4" height="1.8" fill="#9bbbe2"/>
<rect x="458" y="65" width="1" height="16.5" fill="#1f1f1f"/>
<!-- 6 chip -->
<path d="M466.5,65.3 V80 M468.5,65.3 V80 M470.5,65.3 V80 M472.5,65.3 V80 M474.5,65.3 V80 M476.5,65.3 V80 M478.5,65.3 V80" stroke="#e8e8e8" stroke-width="0" fill="none"/>
<path d="M468.6,65.2 V80 M470.6,65.2 V80 M472.6,65.2 V80 M474.6,65.2 V80 M476.6,65.2 V80 M465.2,68.6 H480 M465.2,70.6 H480 M465.2,72.6 H480 M465.2,74.6 H480 M465.2,76.6 H480" stroke="#f0f0f0" stroke-width="0.9" fill="none"/>
<rect x="467.6" y="67.6" width="10" height="10" rx="0.8" fill="#d3dbe6"/>
<!-- 7 route -->
<path d="M496.6,77.1 L504.2,69.6" stroke="#8098d2" stroke-width="1.5" fill="none"/>
<path d="M494.2,74 V67.4 H500" stroke="#f0b244" stroke-width="1.3" fill="none"/>
<path d="M502,67.4 l-2.6,-2 v4 z" fill="#f0b244"/>
<circle cx="495.2" cy="78.5" r="2" fill="#3a3320" stroke="#e6c232" stroke-width="1.2"/>
<circle cx="505.5" cy="68.3" r="2" fill="#3a3320" stroke="#e6c232" stroke-width="1.2"/>
<!-- 8 wave -->
<path d="M523,75.6 V71.4 A2.9,2.9 0 0 1 528.8,71.4 V73.2 A1.9,1.9 0 0 0 532.6,73.2 V71.4 A1.35,2.9 0 0 1 535.3,71.4 V75.6" stroke="#7f9cd8" stroke-width="1.5" fill="none"/>
<circle cx="523" cy="76.3" r="1.6" fill="#3a3320" stroke="#e8b83a" stroke-width="1.1"/>
<circle cx="535.3" cy="76.3" r="1.6" fill="#3a3320" stroke="#e8b83a" stroke-width="1.1"/>
<!-- 9 via -->
<rect x="560" y="69.6" width="5" height="2.8" rx="1.2" fill="#55c43c"/>
<rect x="553.2" y="75.5" width="4" height="5.2" fill="#f6c78c"/>
<circle cx="555.2" cy="71" r="5.4" fill="#f0c41c"/>
<circle cx="555.2" cy="71" r="3" fill="#f9e368"/>
<circle cx="555.2" cy="71" r="1.3" fill="#4a3a10"/>
<!-- 10 step -->
<path d="M577.5,72.4 H583.6 V67.4 H592.6 V78.6 H577.5 Z" fill="#c5e1ef" stroke="#34566f" stroke-width="0.8"/>
<!-- 11 pink square -->
<rect x="605.3" y="65.6" width="15.2" height="15.2" fill="none" stroke="#f0a3da" stroke-width="1.2"/>
<path d="M609.6,76 L616.6,70" stroke="#7ea6e0" stroke-width="1.4"/>
<circle cx="609.4" cy="76.2" r="1.5" fill="#3a3320" stroke="#f0a428" stroke-width="1.1"/>
<circle cx="616.6" cy="70" r="1.5" fill="#3a3320" stroke="#f0a428" stroke-width="1.1"/>
<!-- 12 dimension -->
<path d="M634.8,68 V79 H646.8 V68" stroke="#88a9e0" stroke-width="1.6" fill="none"/>
<circle cx="634.8" cy="66.6" r="1.5" fill="#3a3320" stroke="#e8b03a" stroke-width="1.1"/>
<circle cx="646.8" cy="66.6" r="1.5" fill="#3a3320" stroke="#e8b03a" stroke-width="1.1"/>
<text x="640.8" y="77" font-family="Liberation Sans, sans-serif" font-size="8.6" fill="#e0e0e0" text-anchor="middle" textLength="7.4" lengthAdjust="spacingAndGlyphs">10</text>
<!-- 13 A -->
<text x="669.2" y="79.6" font-family="Liberation Serif, serif" font-weight="bold" font-size="19.5" fill="#6ea6e6" text-anchor="middle">A</text>
<!-- 14 line -->
<path d="M690.8,78.8 L703.4,66.6" stroke="#74a2e2" stroke-width="2.1"/>
</svg>

</div>

</body></html>
